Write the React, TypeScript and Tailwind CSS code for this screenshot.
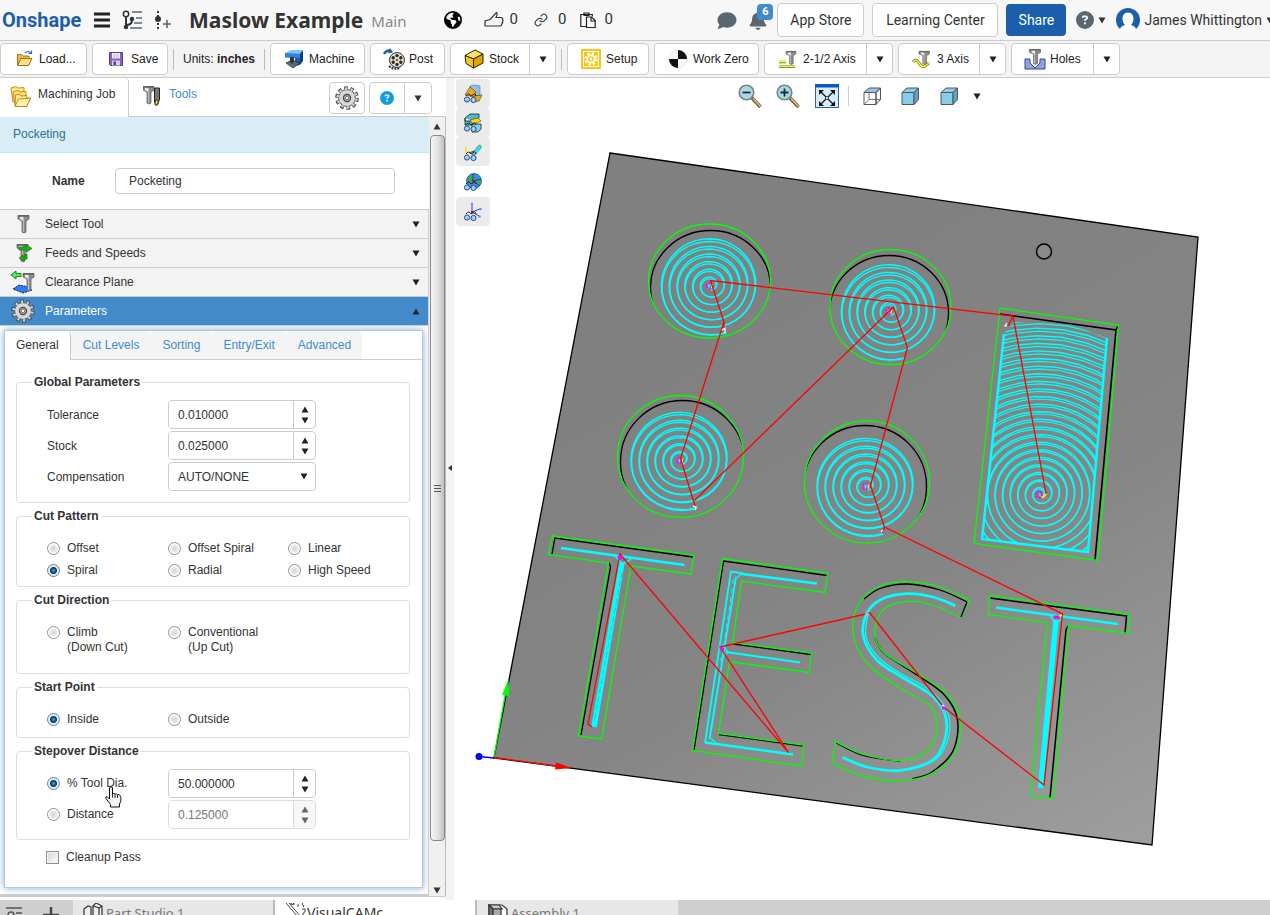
import React, { useState } from 'react';
import { FaBell, FaCircleQuestion, FaComment, FaEarthAmericas } from 'react-icons/fa6';
import { Link } from 'lucide-react';
import clsx from 'clsx';

type Point = [number, number];

/* ---------- small shared bits ---------- */

const Caret = ({ up = false, className }: { up?: boolean; className?: string }) => (
  <svg viewBox="0 0 8 7" className={clsx('h-[7px] w-2 shrink-0 fill-current', className)} aria-hidden="true">
    <path d={up ? 'M4 0.5 7.5 6.5H0.5Z' : 'M0.5 0.5H7.5L4 6.5Z'} />
  </svg>
);

const Mill = ({ x = 0, y = 0 }: { x?: number; y?: number }) => (
  <g transform={`translate(${x} ${y})`}>
    <path d="M0 0.5H11V4L8 6V17Q6 19 4 17V6L0 4Z" fill="#8d8d8d" stroke="#666" strokeWidth="0.8" />
    <path d="M2 1.5H5.5V17H5V6L2 4Z" fill="#e8e8e8" />
    <path d="M0 1H11" stroke="#555" strokeWidth="1.2" />
  </g>
);

const GearIcon = ({ className }: { className?: string }) => (
  <svg viewBox="0 0 24 24" className={className} fill="none" aria-hidden="true">
    <circle cx="12" cy="12" r="9.5" stroke="#4a4a4a" strokeWidth="4.6" strokeDasharray="3.4 2.57" />
    <circle cx="12" cy="12" r="8.4" fill="#dcdcdc" stroke="#555" strokeWidth="1" />
    <circle cx="12" cy="12" r="9.2" stroke="#d2d2d2" strokeWidth="3" strokeDasharray="2 3.78" strokeDashoffset="-0.7" />
    <circle cx="12" cy="12" r="6.6" fill="#d6d6d6" />
    <circle cx="12" cy="12" r="3.6" fill="#a9a9a9" stroke="#444" strokeWidth="1.1" />
    <circle cx="12" cy="12" r="1.8" fill="#fffbe0" stroke="#555" strokeWidth="0.7" />
  </svg>
);

/* ---------- toolbar icons ---------- */

const FolderOpenIcon = () => (
  <svg viewBox="0 0 20 20" className="h-5 w-5">
    <path d="M3.5 5.5h4l1.5 1.5h6v9h-11.5z" fill="#e9b84c" stroke="#9a6a10" strokeWidth="0.9" />
    <path d="M3.5 16.5 7 9.5h11l-3.5 7z" fill="#ffe08a" stroke="#9a6a10" strokeWidth="0.9" />
    <path d="M11 4q3-3 6 0M17.5 1.5v3h-3" fill="none" stroke="#3c6ea5" strokeWidth="1.2" />
  </svg>
);

const SaveIcon = () => (
  <svg viewBox="0 0 20 20" className="h-5 w-5">
    <path d="M3.5 3.5h13v13h-12l-1-1z" fill="#8a63b8" stroke="#5d3b8c" />
    <rect x="6" y="4" width="8" height="5.5" fill="#f5f0fb" />
    <path d="M7 6h6M7 8h6" stroke="#b9a4d4" strokeWidth="0.8" />
    <rect x="6" y="11.5" width="8" height="5" fill="#d8cbea" />
    <rect x="7.5" y="12.5" width="2.5" height="3.5" fill="#5d3b8c" />
  </svg>
);

const MachineIcon = () => (
  <svg viewBox="0 0 20 20" className="h-5 w-5">
    <path d="M1 4 7 1h12l-3 3.5z" fill="#7cc4f8" />
    <path d="M1 4l15 .5v5L1 8.500z" fill="#2a83dd" />
    <path d="M16 4.500 19 1v11l-3 4z" fill="#0d3f80" />
    <path d="M11 9h5v7l-5 1z" fill="#1d5fae" />
    <path d="M2 14l6-3 8 3-7 5z" fill="#5a6a7c" stroke="#222" strokeWidth="0.7" />
    <path d="M6 8h4v5l-2 2-2-2z" fill="#333" />
  </svg>
);

const PostIcon = () => (
  <svg viewBox="0 0 22 22" className="h-[22px] w-[22px] shrink-0">
    <path d="M1 6q3-5 7-3" fill="none" stroke="#1c5fa8" strokeWidth="2.4" />
    <path d="M7 0l3 4.500-5 1z" fill="#1c5fa8" />
    <circle cx="14" cy="12" r="7.5" fill="#e6dfc8" stroke="#333" strokeWidth="1" />
    {[0, 60, 120, 180, 240, 300].map((a) => (
      <circle key={a} cx="14" cy="7.6" r="1.7" fill="#2c2c2c" transform={`rotate(${a} 14 12)`} />
    ))}
    <circle cx="14" cy="12" r="1" fill="#2c2c2c" />
    <path d="M6 18q4 4 11 2" fill="none" stroke="#333" strokeWidth="2" strokeDasharray="2 1" />
  </svg>
);

const StockIcon = () => (
  <svg viewBox="0 0 20 20" className="h-5 w-5" stroke="#2b2200" strokeWidth="1" strokeLinejoin="round">
    <path d="M1 6.500 11 1l8 4-9.500 5z" fill="#ffe36a" />
    <path d="M1 6.500 9.500 10v9L2 14.500z" fill="#f7c41e" />
    <path d="M9.500 10 19 5v9l-9.500 5z" fill="#dba400" />
  </svg>
);

const SetupIcon = () => (
  <svg viewBox="0 0 20 20" className="h-5 w-5" fill="none">
    <rect width="20" height="20" rx="1" fill="#ffc20e" />
    <rect x="2" y="2" width="16" height="16" fill="#fff" />
    <rect x="3" y="3" width="14" height="14" fill="#ffc20e" />
    <circle cx="10" cy="10" r="5.6" stroke="#fff" strokeWidth="2.2" strokeDasharray="2.4 2" />
    <circle cx="10" cy="10" r="4.5" fill="#fff" />
    <circle cx="10" cy="10" r="2.8" fill="#ffc20e" />
    <circle cx="10" cy="10" r="1.4" fill="#fff" />
  </svg>
);

const WorkZeroIcon = () => (
  <svg viewBox="0 0 20 20" className="h-5 w-5">
    <circle cx="10" cy="10" r="9" fill="#ececec" stroke="#ccc" strokeWidth="0.6" />
    <path d="M10 10h9A9 9 0 0 1 10 19Z" fill="#f6f6f6" />
    <path d="M10 10H1A9 9 0 0 1 10 1Z" fill="#f6f6f6" />
    <path d="M10 10V1A9 9 0 0 1 19 10Z" fill="#111" />
    <path d="M10 10V19A9 9 0 0 1 1 10Z" fill="#111" />
  </svg>
);

const TwoAxisIcon = () => (
  <svg viewBox="0 0 20 20" className="h-5 w-5 overflow-visible">
    <path d="M1 13h7M1 17.500h16" stroke="#555" strokeWidth="2.6" />
    <path d="M1 12.600h7M1 17.200h16" stroke="#ff0" strokeWidth="1.6" />
    <g transform="translate(8 2) scale(0.9 0.75)"><Mill /></g>
  </svg>
);

const ThreeAxisIcon = () => (
  <svg viewBox="0 0 20 20" className="h-5 w-5 overflow-visible">
    <path d="M1 13q3-4 6 1t6 3 4-3" fill="none" stroke="#555" strokeWidth="2.8" />
    <path d="M1 13q3-4 6 1t6 3 4-3" fill="none" stroke="#ff0" strokeWidth="1.6" />
    <g transform="translate(7 2) scale(0.95 0.75)"><Mill /></g>
  </svg>
);

const HolesIcon = () => (
  <svg viewBox="0 0 20 22" className="h-[22px] w-5 overflow-visible">
    <path d="M0 11h5v4l5 5 5-5v-4h5v10H0z" fill="#8fa3d8" stroke="#34458a" />
    <g transform="translate(4.500 1) scale(1 0.85)"><Mill /></g>
  </svg>
);

/* ---------- header ---------- */

const Header = () => (
  <header className="flex h-[41px] shrink-0 items-center whitespace-nowrap border-b border-[#ccc] bg-[#f7f7f7] font-['Roboto',sans-serif] text-sm text-[#333]">
    <a href="#home" className="ml-[2px] w-20 text-xl font-bold text-[#1b5faa]">Onshape</a>
    <button className="ml-3" aria-label="Menu">
      <svg viewBox="0 0 16 16" className="h-4 w-4"><path d="M0 2h16M0 8h16M0 14h16" stroke="#222" strokeWidth="3" /></svg>
    </button>
    <button className="ml-3" aria-label="Versions">
      <svg viewBox="0 0 20 20" className="h-5 w-5" fill="none" stroke="#333" strokeWidth="1.5">
        <circle cx="4" cy="4" r="2.7" />
        <path d="M4 7v12M4 15q6 0 6-5" strokeWidth="2" />
        <circle cx="4" cy="17" r="1.5" fill="#333" />
        <circle cx="10" cy="9" r="1.5" fill="#333" />
        <path d="M10 2h10M14 8h6M12 13h8M8 18h12" stroke="#5b6770" />
      </svg>
    </button>
    <button className="ml-3" aria-label="Create version">
      <svg viewBox="0 0 18 20" className="h-5 w-[18px]" fill="none" stroke="#333">
        <path d="M4 1v18" strokeWidth="2" strokeDasharray="2 2" />
        <circle cx="4" cy="9" r="3" fill="#333" stroke="none" />
        <path d="M13 10v8M9 14h8" stroke="#5b6770" strokeWidth="1.6" />
      </svg>
    </button>
    <h1 className="ml-[17px] font-['Noto_Sans',sans-serif] text-[21px] font-bold">Maslow Example</h1>
    <span className="ml-2 mt-1 font-['Noto_Sans',sans-serif] text-[15px] text-[#888]">Main</span>
    <FaEarthAmericas className="ml-[37px] h-[18px] w-[18px] text-black" />
    <button className="ml-[22px] flex items-center gap-1.5 text-[15px]">
      <svg viewBox="0 0 20 18" className="h-[18px] w-5" fill="none" stroke="#333" strokeWidth="1.2">
        <path d="M1 15V10l5-1.500L12.500 1.500q1.500 1-.5 5h5q2 .3 1.500 2 1 1 0 2.200 .5 1.300-.7 2.100 .2 1.700-1.500 2.200H8L6 15z" />
      </svg>
      0
    </button>
    <button className="ml-4 flex items-center gap-2.5 text-[15px]"><Link className="h-[14px] w-[14px]" strokeWidth={1.8} />0</button>
    <button className="ml-3.5 flex items-center gap-2 text-[15px]">
      <svg viewBox="0 0 16 16" className="h-4 w-4" fill="none" stroke="#222" strokeWidth="1.2">
        <path d="M6 14.500H.8V2.500h11.500v2M4 3.500V1h5v2.500z" />
        <path d="M6.500 5h5l3.700 3.500v7H6.500zM11 5v4h4" />
      </svg>
      0
    </button>
    <div className="-mr-1 ml-auto flex shrink-0 items-center">
      <FaComment className="h-[19px] w-5 text-[#5b6770]" />
      <div className="relative ml-3">
        <FaBell className="h-[19px] w-[18px] text-[#5b6770]" />
        <span className="absolute -top-[7px] left-[8px] flex h-4 w-4 items-center justify-center rounded-sm bg-[#428bca] text-[11px] font-bold text-white">6</span>
      </div>
      <button className="ml-2.5 h-[34px] w-[87px] rounded border border-[#ccc] bg-white">App Store</button>
      <button className="ml-2 h-[34px] w-[126px] rounded border border-[#ccc] bg-white">Learning Center</button>
      <button className="ml-2 h-8 w-[60px] rounded bg-[#1b5faa] text-white">Share</button>
      <button className="ml-2.5 flex items-center gap-1" aria-label="Help">
        <FaCircleQuestion className="h-[18px] w-[18px] text-[#5b6770]" />
        <Caret className="h-[5px]" />
      </button>
      <button className="ml-2.5 flex items-center gap-1">
        <svg viewBox="0 0 24 24" className="h-6 w-6">
          <circle cx="12" cy="12" r="12" fill="#1b5faa" />
          <path d="M12 4.500c4 0 5.500 3 5.500 6.500 0 3-1.500 5-2.500 6 3 .8 5 2 5 5a12 12 0 0 1-16 0c0-3 2-4.200 5-5-1-1-2.500-3-2.500-6 0-3.500 1.500-6.500 5.500-6.500" fill="#fff" />
        </svg>
        James Whittington
        <Caret className="h-[5px]" />
      </button>
    </div>
  </header>
);

/* ---------- command bar ---------- */

interface ToolButtonProps {
  icon: React.ReactNode;
  label: string;
  menu?: boolean;
  className: string;
}

const ToolButton = ({ icon, label, menu, className }: ToolButtonProps) => (
  <div className={clsx('flex h-8 shrink-0 rounded border border-[#ccc] bg-white', className)}>
    <button className="flex flex-1 items-center gap-[5px] pl-[13px]">
      <span className="flex w-5 justify-center">{icon}</span>
      {label}
    </button>
    {menu && (
      <button className="flex w-[26px] items-center justify-center border-l border-[#ccc]" aria-label={`${label} menu`}>
        <Caret />
      </button>
    )}
  </div>
);

const Divider = () => <span className="h-[21px] w-px shrink-0 bg-[#bbb]" />;

const CommandBar = () => (
  <div className="flex h-[37px] shrink-0 items-center gap-[5px] whitespace-nowrap border-b border-[#ccc] bg-[#f3f3f3] text-xs text-[#222]">
    <ToolButton icon={<FolderOpenIcon />} label="Load..." className="min-w-[87px]" />
    <ToolButton icon={<SaveIcon />} label="Save" className="min-w-[76px]" />
    <Divider />
    <span className="w-20 pl-1">Units: <b>inches</b></span>
    <Divider />
    <ToolButton icon={<MachineIcon />} label="Machine" className="min-w-[95px]" />
    <ToolButton icon={<PostIcon />} label="Post" className="min-w-[75px]" />
    <ToolButton icon={<StockIcon />} label="Stock" menu className="min-w-[106px]" />
    <Divider />
    <ToolButton icon={<SetupIcon />} label="Setup" className="min-w-[82px]" />
    <ToolButton icon={<WorkZeroIcon />} label="Work Zero" className="min-w-[105px]" />
    <ToolButton icon={<TwoAxisIcon />} label="2-1/2 Axis" menu className="min-w-[129px]" />
    <ToolButton icon={<ThreeAxisIcon />} label="3 Axis" menu className="min-w-[108px]" />
    <ToolButton icon={<HolesIcon />} label="Holes" menu className="min-w-[109px]" />
  </div>
);

/* ---------- left panel ---------- */

const JobTabs = () => (
  <div className="flex h-[39px] shrink-0">
    <button className="flex w-[129px] items-start gap-[7px] rounded-tr border-r border-[#ccc] pl-2.5 pt-2">
      <svg viewBox="0 0 21 22" className="h-[22px] w-[21px]" stroke="#b8860b" strokeWidth="0.9" strokeLinejoin="round">
        <path d="M1 2l5-1.500L8 2l6-.500V12L3 16z" fill="#ffe680" />
        <path d="M3 6l5-1.500L10 6l6-.500V15L5 19z" fill="#ffe27a" />
        <path d="M5 20 5.500 9l4-1L11 10l6-.5v3l3.500-.5-4 8.500z" fill="#ffe88f" />
        <path d="M5 20.500 8.500 13l12-1-4 8.500z" fill="#fff0a8" />
      </svg>
      Machining Job
    </button>
    <div className="flex flex-1 items-start border-b border-[#ccc]">
      <button className="flex items-start gap-2 pl-3.5 pt-2 text-[#428bca]">
        <svg viewBox="0 0 18 20" className="h-5 w-[18px]">
          <Mill />
          <path d="M11.500 2h5v11l-2 6h-2l-1-4z" fill="#777" stroke="#222" />
          <path d="M12.500 14l3 1-1.500 4h-2z" fill="#ffd21f" stroke="#222" strokeWidth="0.7" />
        </svg>
        Tools
      </button>
      <button className="ml-auto mt-1 flex h-8 w-9 items-center justify-center rounded border border-[#ccc]" aria-label="Settings">
        <GearIcon className="h-6 w-6" />
      </button>
      <div className="ml-1 mr-3.5 mt-1 flex h-8 rounded border border-[#ccc]">
        <button className="flex w-[34px] items-center justify-center" aria-label="Help">
          <FaCircleQuestion className="h-3.5 w-3.5 text-[#169be0]" />
        </button>
        <button className="flex w-[27px] items-center justify-center border-l border-[#ccc]" aria-label="Help menu">
          <Caret />
        </button>
      </div>
    </div>
  </div>
);

const SelectToolIcon = () => (
  <svg viewBox="0 0 24 24" className="h-6 w-6"><Mill x={7} y={3} /></svg>
);

const FeedsIcon = () => (
  <svg viewBox="0 0 24 24" className="h-6 w-6">
    <Mill x={6} y={3} />
    <path d="M8 6h7V3.500l6 4-6 4V9H8z" fill="#19b319" stroke="#0a6b0a" strokeWidth="0.6" />
    <path d="M16 13v5h-3v2l-5-3 4-3v2l2-.5V13z" fill="#19b319" stroke="#0a6b0a" strokeWidth="0.6" />
  </svg>
);

const ClearanceIcon = () => (
  <svg viewBox="0 0 24 24" className="h-6 w-6 overflow-visible">
    <path d="M2 19l6-4 10 2 3 3-9 3z" fill="#2f7bff" stroke="#06205c" strokeDasharray="2 1" />
    <Mill x={12} y={3} />
    <path d="M0 5l5-4v2.500h5v3H5V9z" fill="#5ee65e" stroke="#0a7d0a" strokeWidth="0.9" />
  </svg>
);

const SectionRow = ({ icon, label, open = false }: { icon: React.ReactNode; label: string; open?: boolean }) => (
  <button
    aria-expanded={open}
    className={clsx(
      'flex h-[29px] w-full items-center border-t border-r border-[#ccc] pl-[11px] pr-2 text-left',
      open ? 'bg-[#428bca] text-white' : 'bg-[#f3f3f3] text-[#333]'
    )}
  >
    {icon}
    <span className="ml-2.5 flex-1">{label}</span>
    <Caret up={open} className="text-[#222]" />
  </button>
);

interface GroupProps {
  title: string;
  className?: string;
  children: React.ReactNode;
}

const Group = ({ title, className, children }: GroupProps) => (
  <fieldset className={clsx('min-w-0 rounded border border-[#ddd]', className)}>
    <legend className="ml-[15px] px-0.5 text-xs font-bold leading-[18px]">{title}</legend>
    <div className="pl-[30px]">{children}</div>
  </fieldset>
);

interface RadioProps {
  name: string;
  label: React.ReactNode;
  checked: boolean;
  onChange: () => void;
}

const Radio = ({ name, label, checked, onChange }: RadioProps) => (
  <label className="flex items-start gap-[7px] leading-[15px]">
    <input
      type="radio"
      name={name}
      checked={checked}
      onChange={onChange}
      className="mt-px h-[13px] w-[13px] shrink-0 appearance-none rounded-full border border-[#8e8f8f] bg-[radial-gradient(circle,#d5d5d5_0%,#e9e9e9_45%,#fff_60%)] checked:border-[#5f7f9b] checked:bg-[radial-gradient(circle,#3fb4ee_0,#0b5a94_2px,#0a3557_3px,#e6eef4_4px)]"
    />
    <span>{label}</span>
  </label>
);

interface SpinnerProps {
  label: string;
  value: string;
  onChange: (value: string) => void;
  disabled?: boolean;
}

const Spinner = ({ label, value, onChange, disabled }: SpinnerProps) => (
  <div className={clsx('flex h-[29px] w-[148px] overflow-hidden rounded border', disabled ? 'border-[#ddd] text-[#777]' : 'border-[#ccc] text-[#333]')}>
    <input
      type="text"
      aria-label={label}
      value={value}
      disabled={disabled}
      onChange={(e) => onChange(e.target.value)}
      className="w-0 flex-1 bg-white pl-[9px]"
    />
    <div className={clsx('flex w-[22px] flex-col items-center justify-center gap-1 border-l', disabled ? 'border-[#ddd] bg-[#f7f7f7] text-[#666]' : 'border-[#ccc] text-[#222]')}>
      <button disabled={disabled} aria-label={`Increase ${label}`}><Caret up /></button>
      <button disabled={disabled} aria-label={`Decrease ${label}`}><Caret /></button>
    </div>
  </div>
);

const HandCursor = () => (
  <svg viewBox="0 0 17 22" className="pointer-events-none absolute left-[58px] top-[10px] h-[22px] w-[17px]">
    <path
      d="M5.500 1q1.500-.8 2 .8V8q1.500-1.500 2.500.2 1.500-1 2.500.5 2-.8 2.500 1 1.500 1 .8 5.500L14.500 18v3h-9v-2.500L1 12.500q-.8-2 1-2L4.500 13V2z"
      fill="#f4f4f4"
      stroke="#111"
    />
    <path d="M7.500 8v3.500M10 8.500v3.500M12.500 9v3" stroke="#111" strokeWidth="0.9" />
  </svg>
);

const patterns = ['Offset', 'Offset Spiral', 'Linear', 'Spiral', 'Radial', 'High Speed'];
const paramTabs = ['General', 'Cut Levels', 'Sorting', 'Entry/Exit', 'Advanced'];

const GeneralForm = () => {
  const [tolerance, setTolerance] = useState('0.010000');
  const [stock, setStock] = useState('0.025000');
  const [compensation, setCompensation] = useState('AUTO/NONE');
  const [pattern, setPattern] = useState('Spiral');
  const [direction, setDirection] = useState('');
  const [start, setStart] = useState('Inside');
  const [stepMode, setStepMode] = useState('percent');
  const [percent, setPercent] = useState('50.000000');
  const [distance, setDistance] = useState('0.125000');
  const [cleanup, setCleanup] = useState(false);

  return (
    <div className="flex flex-col gap-1 pl-[11px] pr-3 pt-[13px] text-[#333]">
      <Group title="Global Parameters" className="pb-[11px] pt-[9px]">
        <div className="grid grid-cols-[121px_1fr] items-center gap-y-0.5">
          <span>Tolerance</span>
          <Spinner label="Tolerance" value={tolerance} onChange={setTolerance} />
          <span>Stock</span>
          <Spinner label="Stock" value={stock} onChange={setStock} />
          <label htmlFor="compensation">Compensation</label>
          <div className="relative flex h-[29px] w-[148px] items-center">
            <select
              id="compensation"
              value={compensation}
              onChange={(e) => setCompensation(e.target.value)}
              className="h-full w-full appearance-none rounded border border-[#ccc] bg-white pl-[9px]"
            >
              <option>AUTO/NONE</option>
              <option>LEFT</option>
              <option>RIGHT</option>
            </select>
            <Caret className="pointer-events-none absolute right-2 text-[#222]" />
          </div>
        </div>
      </Group>

      <Group title="Cut Pattern" className="pb-2 pt-4">
        <div className="grid grid-cols-[121px_120px_1fr] gap-y-[7px]">
          {patterns.map((p) => (
            <Radio key={p} name="pattern" label={p} checked={pattern === p} onChange={() => setPattern(p)} />
          ))}
        </div>
      </Group>

      <Group title="Cut Direction" className="pb-[18px] pt-4">
        <div className="grid grid-cols-[121px_1fr]">
          <Radio name="direction" label={<>Climb<br />(Down Cut)</>} checked={direction === 'climb'} onChange={() => setDirection('climb')} />
          <Radio name="direction" label={<>Conventional<br />(Up Cut)</>} checked={direction === 'conventional'} onChange={() => setDirection('conventional')} />
        </div>
      </Group>

      <Group title="Start Point" className="pb-2.5 pt-4">
        <div className="grid grid-cols-[121px_1fr]">
          <Radio name="start" label="Inside" checked={start === 'Inside'} onChange={() => setStart('Inside')} />
          <Radio name="start" label="Outside" checked={start === 'Outside'} onChange={() => setStart('Outside')} />
        </div>
      </Group>

      <Group title="Stepover Distance" className="pb-2.5 pt-[9px]">
        <div className="grid grid-cols-[121px_1fr] items-center gap-y-0.5">
          <div className="relative">
            <Radio name="step" label="% Tool Dia." checked={stepMode === 'percent'} onChange={() => setStepMode('percent')} />
            <HandCursor />
          </div>
          <Spinner label="Percent of tool diameter" value={percent} onChange={setPercent} disabled={stepMode !== 'percent'} />
          <Radio name="step" label="Distance" checked={stepMode === 'distance'} onChange={() => setStepMode('distance')} />
          <Spinner label="Distance" value={distance} onChange={setDistance} disabled={stepMode !== 'distance'} />
        </div>
      </Group>

      <label className="flex items-center gap-[7px] pl-[30px] pt-1.5 leading-[15px]">
        <input
          type="checkbox"
          checked={cleanup}
          onChange={(e) => setCleanup(e.target.checked)}
          className="h-[13px] w-[13px] appearance-none border border-[#8e8f8f] bg-[linear-gradient(135deg,#cfd3d8,#fff)] shadow-[inset_0_0_0_1px_#f4f4f4] checked:bg-[#428bca]"
        />
        Cleanup Pass
      </label>
    </div>
  );
};

const ScrollTrack = () => (
  <div className="flex w-[17px] shrink-0 flex-col items-center border-r border-[#bbb] bg-[#f0f0f0]">
    <div className="flex h-[18px] items-center text-[#333]"><Caret up className="h-1" /></div>
    <div className="flex w-[15px] flex-[705] flex-col items-center justify-center gap-0.5 rounded-sm border border-[#888] bg-[linear-gradient(90deg,#f5f5f5,#e6e6e6_45%,#c0c0c4)]">
      <span className="h-px w-[7px] bg-[#555]" />
      <span className="h-px w-[7px] bg-[#555]" />
      <span className="h-px w-[7px] bg-[#555]" />
    </div>
    <div className="flex-[43]" />
    <div className="flex h-3 items-center text-[#333]"><Caret className="h-1" /></div>
  </div>
);

const SidePanel = () => {
  const [name, setName] = useState('Pocketing');
  const [tab, setTab] = useState('General');

  return (
    <aside className="flex w-[446px] shrink-0 flex-col border-b border-[#ccc] text-xs text-[#333]">
      <JobTabs />
      <div className="flex min-h-0 flex-1">
        <div className="flex flex-1 flex-col overflow-hidden border-b-2 border-[#ccc]">
          <div className="h-[36px] shrink-0 border-b border-[#bce8f1] bg-[#d9edf7] pl-[13px] leading-[34px] text-[#31708f]">Pocketing</div>
          <div className="flex h-14 shrink-0 items-center pl-[52px]">
            <label htmlFor="op-name" className="w-[63px] font-bold">Name</label>
            <input
              id="op-name"
              value={name}
              onChange={(e) => setName(e.target.value)}
              className="h-[26px] w-[280px] rounded border border-[#ccc] pl-[13px]"
            />
          </div>
          <SectionRow icon={<SelectToolIcon />} label="Select Tool" />
          <SectionRow icon={<FeedsIcon />} label="Feeds and Speeds" />
          <SectionRow icon={<ClearanceIcon />} label="Clearance Plane" />
          <SectionRow icon={<GearIcon className="h-6 w-6" />} label="Parameters" open />
          <div className="min-h-0 flex-1 overflow-hidden border-r border-t border-[#ccc] pb-1.5 pl-1 pr-[5px] pt-1">
            <div className="h-full border border-[#b9c7d3] bg-white shadow-[0_0_7px_rgba(66,139,202,0.7)]">
              <div className="flex h-[29px]" role="tablist">
                {paramTabs.map((t) => (
                  <button
                    key={t}
                    role="tab"
                    aria-selected={tab === t}
                    onClick={() => setTab(t)}
                    className={clsx(
                      'h-[29px] pr-[11px]',
                      tab === t ? 'rounded-tr border-r border-[#ccc] bg-white pb-px pl-[11px]' : 'rounded-t border-b border-[#ccc] bg-[#f4f4f4] pl-3 text-[#428bca]'
                    )}
                  >
                    {t}
                  </button>
                ))}
                <span className="flex-1 border-b border-[#ccc]" />
              </div>
              <GeneralForm />
            </div>
          </div>
        </div>
        <ScrollTrack />
      </div>
    </aside>
  );
};

/* ---------- 3D view ---------- */

// Archimedean toolpath, wound outwards and ending at endDeg
const spiral = (cx: number, cy: number, rEnd: number, pitch: number, endDeg: number, ky = 1) => {
  const turns = rEnd / pitch;
  const steps = Math.round(turns * 40);
  const pts: string[] = [];
  for (let i = 0; i <= steps; i++) {
    const t = (i / steps) * turns;
    const a = (endDeg / 180) * Math.PI + (turns - t) * Math.PI * 2;
    const r = pitch * t;
    pts.push(`${(cx + r * Math.cos(a)).toFixed(1)},${(cy + r * ky * Math.sin(a)).toFixed(1)}`);
  }
  return pts.join(' ');
};

// Catmull-Rom through the given points
const smooth = (p: Point[], first = 'M') => {
  let d = `${first}${p[0][0]} ${p[0][1]}`;
  for (let i = 0; i < p.length - 1; i++) {
    const a = p[Math.max(i - 1, 0)];
    const b = p[i];
    const c = p[i + 1];
    const e = p[Math.min(i + 2, p.length - 1)];
    d += `C${b[0] + (c[0] - a[0]) / 6} ${b[1] + (c[1] - a[1]) / 6} ${c[0] - (e[0] - b[0]) / 6} ${c[1] - (e[1] - b[1]) / 6} ${c[0]} ${c[1]}`;
  }
  return d;
};

const pockets = [
  { id: 'p1', x: 709.5, y: 281, rx: 61, ry: 57, bx: 710.5, by: 287.5, sx: 710.5, sy: 285, r: 51.5, pitch: 7.8, end: 72, gap: 1.2 },
  { id: 'p2', x: 890.5, y: 307, rx: 60.5, ry: 57.5, bx: 889, by: 313, sx: 890, sy: 310.5, r: 51, pitch: 7.8, end: 74, gap: 1.2 },
  { id: 'p3', x: 680.5, y: 456.5, rx: 63, ry: 61, bx: 682.5, by: 461.5, sx: 681, sy: 459.5, r: 52.5, pitch: 8, end: 72, gap: 0.7 },
  { id: 'p4', x: 867, y: 482, rx: 62.5, ry: 61, bx: 865, by: 486.5, sx: 867, sy: 485.5, r: 52.5, pitch: 8, end: 72, gap: 0.7 }
];

const sInner: Point[] = [[961, 617.7], [933, 605], [907, 601.3], [884, 609], [874.7, 630], [883, 651.7], [918, 674], [946, 693], [960, 720], [955, 753], [933, 773], [900, 780.7], [862, 776], [832.3, 763.3]];
const sOuter: Point[] = [[835.7, 741.7], [863, 754], [900, 760.7], [927, 751], [937, 726.7], [930, 706], [900, 688], [867, 663], [853, 633], [859, 603], [880, 586], [907, 581.7], [940, 587], [969.3, 600]];
const sPath: Point[] = [[955.3, 605.7], [933, 597], [906.7, 593.7], [880, 600], [866, 615], [863.5, 637], [876.7, 660], [900, 676], [930, 694], [944.5, 713], [945.5, 737], [933, 760], [900, 770.5], [867, 767], [842.3, 757.3]];

const Scene = () => (
  <svg viewBox="454 78 816 822" preserveAspectRatio="xMinYMin meet" className="absolute inset-0 h-full w-full" fill="none" role="img" aria-label="Toolpath preview">
    <defs>
      <linearGradient id="sheet" gradientUnits="userSpaceOnUse" x1="700" y1="300" x2="1040" y2="900">
        <stop offset="0" stopColor="#808080" />
        <stop offset="0.5" stopColor="#858585" />
        <stop offset="1" stopColor="#9e9e9e" />
      </linearGradient>
      {pockets.map((p) => (
        <clipPath key={p.id} id={p.id}><ellipse cx={p.x} cy={p.y} rx={p.rx} ry={p.ry} /></clipPath>
      ))}
      <clipPath id="slot"><path d="M1004 334L1014 322L1070 324L1107 338L1088 552L982 539Z" /></clipPath>
    </defs>

    <path d="M610 153L1198 237L1152 845L494 758Z" fill="url(#sheet)" stroke="#000" strokeWidth="1.3" />
    <circle cx="1044" cy="251.5" r="7.5" fill="#8a8a8a" stroke="#000" strokeWidth="1.5" />

    {pockets.map((p) => (
      <g key={p.id}>
        <ellipse cx={p.bx} cy={p.by} rx={p.rx - 1} ry={p.ry} stroke="#000" strokeWidth="1.3" clipPath={`url(#${p.id})`} />
        <ellipse cx={p.x} cy={p.y} rx={p.rx} ry={p.ry} stroke="#0f0" strokeWidth="1.3" />
        <polyline points={spiral(p.sx, p.sy, p.r, p.pitch, p.end, 0.98)} stroke="#0ff" strokeWidth="1.4" />
        <polyline points={spiral(p.sx, p.sy + p.gap, p.r - 0.7, p.pitch, p.end, 0.96)} stroke="#0ff" strokeWidth="1.3" />
        <circle cx={p.sx - 1} cy={p.sy + 1} r="2.8" stroke="#f0f" strokeWidth="2" strokeDasharray="2 1" />
        <path d={`M${p.sx + 1} ${p.sy + 3}l1-4`} stroke="#fe0" strokeWidth="1.3" />
      </g>
    ))}

    {/* rectangular pocket */}
    <path d="M1000 314L1116 330L1095 560M1116 330L1118 326" stroke="#000" strokeWidth="1.6" />
    <path d="M1000 308L1118.500 325L1098 560.500L974 543.500Z" stroke="#0f0" strokeWidth="1.3" />
    <g clipPath="url(#slot)" stroke="#0ff">
      <polyline points={spiral(1040.5, 493.5, 230, 7.6, 90)} strokeWidth="1.4" />
      <polyline points={spiral(1040.5, 494.5, 229.5, 7.6, 90, 0.99)} strokeWidth="1.2" />
    </g>
    <path d="M1004 334L982 539L1088 552L1107 338" stroke="#0ff" strokeWidth="2.5" />
    <circle cx="1039" cy="494.5" r="3" stroke="#f0f" strokeWidth="2" strokeDasharray="2 1" />
    <path d="M1042 498l4-4" stroke="#fe0" strokeWidth="2" />

    {/* first T */}
    <path d="M552 554L555 538L693 557M609 563L610.500 567L581 735" stroke="#000" strokeWidth="1.3" />
    <path d="M552.5 536L694 555L691 574L631 566L601.5 739L578.5 736L608.5 563L548.5 554.500Z" stroke="#0f0" strokeWidth="1.3" />
    <path d="M561 548L684.500 565" stroke="#0ff" strokeWidth="2.6" />
    <path d="M615 556L623 564L631 559" stroke="#0ff" strokeWidth="1.5" />
    <path d="M622 562L594 727" stroke="#0ff" strokeWidth="5.5" />
    <path d="M622 572L594 722" stroke="#788" strokeWidth="0.6" strokeDasharray="6 3" />

    {/* E */}
    <path d="M694 750L723.500 561L827 575.500M733.500 644L811 654.500" stroke="#000" strokeWidth="1.3" />
    <path d="M719 734.500L803 746" stroke="#000" strokeWidth="1.3" />
    <path d="M722.5 558.5L827.500 573L825 592.500L741.5 581L732.5 642.500L811.500 653L809 672.500L729.5 661.500L718.5 733.500L803.500 745L801.500 766L692.500 750.500Z" stroke="#0f0" strokeWidth="1.3" />
    <path d="M730.500 571.500L743 573.500M726 652L800 662.500" stroke="#0ff" strokeWidth="2" />
    <path d="M742 574L817 583.500M705 742.500L793 754.500" stroke="#0ff" strokeWidth="2.4" />
    <path d="M731 571L705 743M736 577L709.500 739" stroke="#0ff" strokeWidth="1.8" />
    <path d="M733.500 579L712 728" stroke="#0ff" strokeWidth="0.9" strokeDasharray="5 4" />
    <path d="M743 573L736 578M722 644L728 652L720 660M709 737L717 744" stroke="#0ff" strokeWidth="1.3" />

    {/* S */}
    <path d={smooth([[864, 599], [880, 588.5], [907, 584], [940, 590], [967, 602]])} stroke="#000" strokeWidth="1.3" />
    <path d={smooth([[875, 637], [884, 653], [918, 675.5], [944.5, 695], [957.5, 720], [953, 751], [932, 772], [912, 779]])} stroke="#000" strokeWidth="1.5" />
    <path d={smooth([[836, 743], [863, 755.5], [900, 761.5]])} stroke="#000" strokeWidth="1" />
    <path d={`${smooth(sInner)}${smooth(sOuter, 'L')}Z`} stroke="#0f0" strokeWidth="1.3" />
    <path d="M967 602L961 617" stroke="#000" strokeWidth="1.3" />
    <path d={smooth(sPath)} stroke="#0ff" strokeWidth="2.8" />
    <path d={smooth([[868, 614], [866, 637], [879, 658], [900, 673], [931, 691], [948, 713], [948.5, 737], [936, 759], [905, 770]])} stroke="#0ff" strokeWidth="1.2" />

    {/* second T */}
    <path d="M990 598L1126.500 616L1125 633M1068 626L1066 630L1050 797.500" stroke="#000" strokeWidth="1.5" />
    <path d="M990 595.500L1129.500 614.500L1128.500 633.500L1068.500 625.500L1053 798.500L1030.500 796L1047 622.500L988 614.500Z" stroke="#0f0" strokeWidth="1.3" />
    <path d="M996 607.500L1118 624" stroke="#0ff" strokeWidth="2.6" />
    <path d="M1049 614L1056 624L1063 617" stroke="#0ff" strokeWidth="1.5" />
    <path d="M1056 620L1040.500 788" stroke="#0ff" strokeWidth="5.5" />

    {/* rapid moves */}
    <path
      d="M1046 493.500L1013 316L710.500 280.500L724 322V330M724 322L680.500 458.500L695 506M694.500 500.500L893.500 307L907.500 347.500L870.500 485.500L884.500 527L1062.500 614L1044 785L943.500 707L870 613L720 647L788.500 752.500L620 554L588 724L592 727M1013 316L1008 326M884.500 527L882 533M907.500 347.500L905 356"
      stroke="#f00"
      strokeWidth="1.3"
    />
    <path d="M722 330l3-2v5M693 506l3 1-1 3M881 532l2-2M1007 326h-2l2-3M865 614h4M942 705l3 2" stroke="#fff" strokeWidth="1.2" />
    <path d="M618 556l4 3M720 648l4 2M1054 617h6M942 708h4" stroke="#f0f" strokeWidth="3" />
    <path d="M1059 616l3-1" stroke="#fe0" strokeWidth="1.5" />

    {/* origin triad */}
    <path d="M494 757L506 690" stroke="#0f0" strokeWidth="1.3" />
    <path d="M508.500 679L509 696L502 695Z" fill="#0f0" />
    <path d="M494 757.500L560 766.500" stroke="#f00" strokeWidth="1.3" />
    <path d="M572 768L556 762.500L555 769.500Z" fill="#f00" />
    <path d="M494 758L479 756.500" stroke="#00f" strokeWidth="1.3" />
    <circle cx="479" cy="756.5" r="3.5" fill="#00f" />
  </svg>
);

const Glasses = () => (
  <g>
    <path d="M3 12q3-4 5 0l2-1q2-3 3 1" fill="none" stroke="#222" />
    <circle cx="4" cy="15.5" r="2.6" fill="#a8cdf0" stroke="#1c4f8f" />
    <circle cx="10.5" cy="16" r="2.6" fill="#a8cdf0" stroke="#1c4f8f" />
  </g>
);

const displayToggles = [
  {
    label: 'Show part',
    on: true,
    art: (
      <>
        <path d="M7 2q5-2 10 0v10H7z" fill="#8fc0ea" stroke="#4a7aa8" strokeWidth="0.6" />
        <path d="M2 11l5-8 6 5-1 5z" fill="#e8a820" stroke="#6b4a00" strokeWidth="0.7" />
        <path d="M11 12l8-1-3 6-6 1z" fill="#e8a820" stroke="#6b4a00" strokeWidth="0.7" />
      </>
    )
  },
  {
    label: 'Show stock',
    on: true,
    art: (
      <>
        <path d="M2 5l5-4h9v4L12 8H2zM2 5v7h8V8" fill="#4db8cc" stroke="#123" strokeWidth="0.8" />
        <path d="M7 7l8-2 3 3-8 3z" fill="#ffd21f" stroke="#5a4300" strokeWidth="0.6" />
        <path d="M9 11h9v5l-3 3H9z" fill="#7fd2e0" stroke="#123" strokeWidth="0.8" />
      </>
    )
  },
  {
    label: 'Show toolpath',
    on: true,
    art: (
      <>
        <path d="M9 13q-1-3 2-4l5-6q3 0 2 3l-6 7z" fill="#2fe0e8" stroke="#2a8c98" strokeWidth="0.7" />
        <path d="M3 5v7" stroke="#e5e500" strokeWidth="1.5" />
        <path d="M6 11l5-2" stroke="#e00" />
      </>
    )
  },
  {
    label: 'Show world',
    on: false,
    art: (
      <>
        <circle cx="11" cy="9" r="7.5" fill="#3d8fdc" stroke="#1b3f7a" strokeWidth="0.7" />
        <path d="M6 4q5-2 6 2l-3 4q-4 0-3-6M14 8q4-1 4 2l-3 4z" fill="#3cae3c" />
        <path d="M10 2v7l8-2M10 9l7 5" fill="none" stroke="#0b3fb0" />
        <circle cx="10" cy="9" r="1.2" fill="#e00" />
      </>
    )
  },
  {
    label: 'Show axes',
    on: true,
    art: (
      <>
        <path d="M9 2v8l8-3M9 10l7 4" fill="none" stroke="#2247c4" />
        <circle cx="9" cy="2" r="1.2" fill="#6b8fe8" />
        <circle cx="17.5" cy="7" r="1.3" fill="#6b8fe8" />
        <circle cx="16.5" cy="14.5" r="1.3" fill="#6b8fe8" />
        <circle cx="9" cy="10" r="1.2" fill="#e00" />
      </>
    )
  }
];

const Magnifier = ({ plus = false }: { plus?: boolean }) => (
  <svg viewBox="0 0 24 24" className="h-6 w-6">
    <path d="M14 14l8.500 9" stroke="#7d5a32" strokeWidth="3.5" />
    <path d="M15 14.500l7.500 8" stroke="#e3c79a" strokeWidth="1.2" />
    <circle cx="8.5" cy="8.5" r="7.3" fill="#a9d9e2" stroke="#75868a" strokeWidth="1.6" />
    <path d={plus ? 'M4.500 8.500h8M8.500 4.500v8' : 'M4.500 8.500h8'} stroke="#1d2b3a" strokeWidth="1.8" />
  </svg>
);

const Cube = ({ wire = false }: { wire?: boolean }) => (
  <svg viewBox="0 0 18 18" className="h-[18px] w-[18px]" stroke="#555" strokeLinejoin="round">
    <path d="M1 5.500 6 1h11.500L13 5.500z" fill="#8fcbe4" />
    <path d="M1 5.500h12v12H1z" fill={wire ? 'none' : '#85cdea'} />
    <path d="M13 5.500 17.500 1v11.500L13 17.500z" fill={wire ? 'none' : '#5da6c8'} />
    {wire && <path d="M6 5.500v7h11.500M1 17.500l5-5" fill="none" strokeWidth="0.8" />}
  </svg>
);

const Viewport = () => (
  <main className="relative min-w-0 flex-1 bg-white">
    <Scene />
    <div className="relative flex items-start">
      <div className="ml-0.5 mt-px flex flex-col">
        {displayToggles.map((t) => (
          <button
            key={t.label}
            aria-label={t.label}
            aria-pressed={t.on}
            className={clsx('flex w-[34px] items-center justify-center rounded', t.on ? 'h-[29px] bg-[#ebebeb]' : 'h-[31px]')}
          >
            <svg viewBox="0 0 20 20" className="h-5 w-5">{t.art}<Glasses /></svg>
          </button>
        ))}
      </div>
      <div className="ml-[248px] mt-1.5 flex items-center">
        <button aria-label="Zoom out"><Magnifier /></button>
        <button className="ml-3.5" aria-label="Zoom in"><Magnifier plus /></button>
        <button className="ml-[15px]" aria-label="Zoom to fit">
          <svg viewBox="0 0 24 24" className="h-6 w-6">
            <rect x="0.5" y="0.5" width="23" height="23" fill="#d7ecf8" stroke="#2a64a8" />
            <path d="M0 0h24v3.500H0z" fill="#0b5bbf" />
            <path d="M6 8l12 12M18 8L6 20" stroke="#111" strokeWidth="1.3" />
            <path d="M4 6h5l-5 5zM20 6v5l-5-5zM4 22v-5l5 5zM20 22h-5l5-5z" fill="#111" />
            <circle cx="12" cy="14" r="1.5" fill="#fff" stroke="#111" strokeWidth="0.7" />
          </svg>
        </button>
        <span className="ml-[9px] h-5 w-px bg-[#ccc]" />
        <button className="ml-3.5" aria-label="Wireframe"><Cube wire /></button>
        <button className="ml-5" aria-label="Shaded"><Cube /></button>
        <button className="ml-[21px]" aria-label="View orientation"><Cube /></button>
        <button className="ml-[15px] text-[#222]" aria-label="View menu"><Caret /></button>
      </div>
    </div>
  </main>
);

/* ---------- document tabs ---------- */

const DocumentTabs = () => (
  <nav className="flex h-[15px] shrink-0 overflow-hidden whitespace-nowrap bg-[#cfcfcf] font-['Noto_Sans',sans-serif] text-[13px] leading-[26px] text-[#777]">
    <div className="flex w-[73px] items-start">
      <button className="ml-1.5 mt-[7px]" aria-label="Manage tabs">
        <svg viewBox="0 0 16 16" className="h-4 w-4" fill="none" stroke="#555" strokeWidth="1.5">
          <path d="M0 1h16M10 6h6M10 10h6" /><circle cx="5" cy="8" r="3" />
        </svg>
      </button>
      <button className="ml-[21px] mt-[7px]" aria-label="New tab">
        <svg viewBox="0 0 16 16" className="h-4 w-4"><path d="M8 0v16M0 8h16" stroke="#444" strokeWidth="2.5" /></svg>
      </button>
    </div>
    <a href="#part" className="flex w-[202px] items-start gap-[3px] border-r-2 border-[#bbb] bg-[#e7e7e7] pl-2.5">
      <svg viewBox="0 0 20 20" className="mt-[3px] h-5 w-5" fill="#eee" stroke="#333" strokeWidth="1.2">
        <path d="M1 6l4-3 3 1v14H1zM10 3l3-3 6 3v15l-9-3zM10 3l6 2v13M16 5l3-2" />
      </svg>
      Part Studio 1
    </a>
    <a href="#cam" className="flex w-[200px] items-start bg-white pl-2.5 text-sm leading-[26px] text-[#333]">
      <svg viewBox="0 0 22 20" className="mt-[3px] h-5 w-[22px]" stroke="#333" strokeWidth="0.9" fill="none">
        <path d="M1 0l12 14M4 0l12 14M6 2V0l1.500 2L9 0v2M13 1v3M18 0q-2 1 0 2t0 2M17 6h3v3l-2 1v6" />
      </svg>
      VisualCAMc
    </a>
    <a href="#assembly" className="flex w-[203px] items-start gap-[3px] border-l-2 border-[#bbb] bg-[#e7e7e7] pl-[11px]">
      <svg viewBox="0 0 20 20" className="mt-1 h-5 w-5" stroke="#333" strokeWidth="1.2">
        <path d="M1 1h13l5 4v15H5L1 16z" fill="#fff" />
        <path d="M1 1h10l3 4H5z" fill="#ccc" />
        <path d="M1 1l4 4v15l-4-4z" fill="#777" />
        <path d="M5 5h8v15H5z" fill="#aaa" />
      </svg>
      Assembly 1
    </a>
  </nav>
);

export default function App() {
  return (
    <div className="flex h-screen flex-col overflow-hidden bg-white font-['Liberation_Sans',Arial,sans-serif]">
      <Header />
      <CommandBar />
      <div className="flex min-h-0 flex-1">
        <div className="mb-[3px] flex"><SidePanel /></div>
        <div className="flex w-2 shrink-0 items-center bg-[#f3f3f3]" role="separator" aria-orientation="vertical">
          <svg viewBox="0 0 4 6" className="mb-[42px] ml-0.5 h-1.5 w-1"><path d="M4 0v6L0 3z" fill="#333" /></svg>
        </div>
        <Viewport />
      </div>
      <DocumentTabs />
    </div>
  );
}
